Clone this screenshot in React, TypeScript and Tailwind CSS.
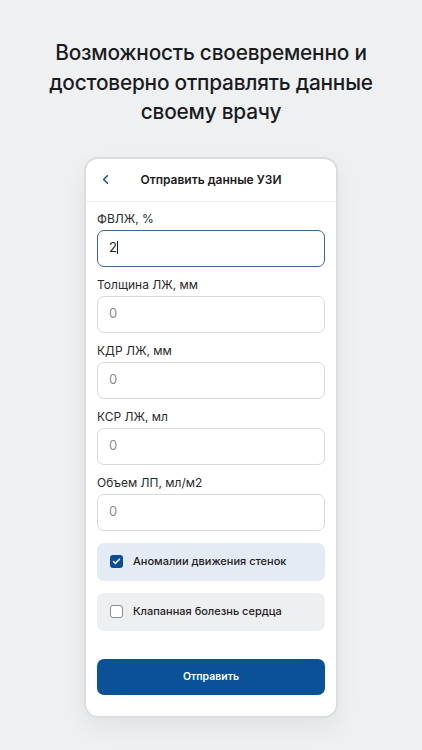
import { ChevronLeft, Check } from "lucide-react";

const fields = [
  { label: "ФВЛЖ, %", value: "2", active: true },
  { label: "Толщина ЛЖ, мм", value: "" },
  { label: "КДР ЛЖ, мм", value: "" },
  { label: "КСР ЛЖ, мл", value: "" },
  { label: "Объем ЛП, мл/м2", value: "" },
];

function Field({ label, value, active }: { label: string; value: string; active?: boolean }) {
  return (
    <div className="flex flex-col">
      <div className="h-4 text-[12px] leading-4 text-[#2a2b2e]">{label}</div>
      <div
        className={
          "mt-[3px] h-[37px] rounded-[7px] bg-white flex items-center px-[11px] text-[13px] " +
          (active ? "border border-[#3b6593]" : "border border-[#d7d9dd]")
        }
      >
        {active ? (
          <span className="text-[#1c1d20]">
            {value}
            <span className="inline-block w-px h-[13px] bg-[#1c1d20] align-[-2px]" />
          </span>
        ) : (
          <span className="text-[#8d8f94]">0</span>
        )}
      </div>
    </div>
  );
}

function CheckRow({ label, checked }: { label: string; checked?: boolean }) {
  return (
    <div
      className={
        "h-[38px] rounded-[7px] flex items-center px-[13px] gap-[10px] " +
        (checked ? "bg-[#e4ebf4]" : "bg-[#eeeff1]")
      }
    >
      {checked ? (
        <div className="w-[13px] h-[13px] rounded-[3px] bg-[#0d4e93] flex items-center justify-center">
          <Check size={9} strokeWidth={4} className="text-white" />
        </div>
      ) : (
        <div className="w-[13px] h-[13px] rounded-[3px] border border-[#8a8c91] bg-white" />
      )}
      <span className="text-[11px] font-medium text-[#1f2023]">{label}</span>
    </div>
  );
}

export default function App() {
  return (
    <div
      className="min-h-[750px] w-[422px] bg-[#eff0f2] flex flex-col items-center overflow-hidden"
      style={{ fontFamily: "Inter, 'Noto Sans', sans-serif" }}
    >
      <h1 className="pt-[38px] text-center text-[20.8px] leading-[29.5px] font-medium text-[#1b1c1f] tracking-[-0.2px]">
        Возможность своевременно и
        <br />
        достоверно отправлять данные
        <br />
        своему врачу
      </h1>

      <div className="mt-[30px] w-[254px] bg-white border-2 border-[#dcdde1] rounded-[14px] shadow-[0_10px_24px_rgba(0,0,0,0.06)]">
        <div className="relative h-[43px] flex items-center justify-center border-b border-[#eeeff1]">
          <ChevronLeft size={15} strokeWidth={2.5} className="absolute left-[12px] text-[#1d4f8c]" />
          <span className="text-[12px] font-semibold text-[#1b1c1f]">Отправить данные УЗИ</span>
        </div>

        <div className="px-[11px] pt-[9px] pb-[21px] flex flex-col">
          <div className="flex flex-col gap-[10px]">
            {fields.map((f) => (
              <Field key={f.label} label={f.label} value={f.value} active={f.active} />
            ))}
          </div>

          <div className="mt-[12px] flex flex-col gap-[12px]">
            <CheckRow label="Аномалии движения стенок" checked />
            <CheckRow label="Клапанная болезнь сердца" />
          </div>

          <button className="mt-[28px] h-[36px] rounded-[7px] bg-[#0a5198] text-white text-[10.5px] font-semibold">
            Отправить
          </button>
        </div>
      </div>
    </div>
  );
}
